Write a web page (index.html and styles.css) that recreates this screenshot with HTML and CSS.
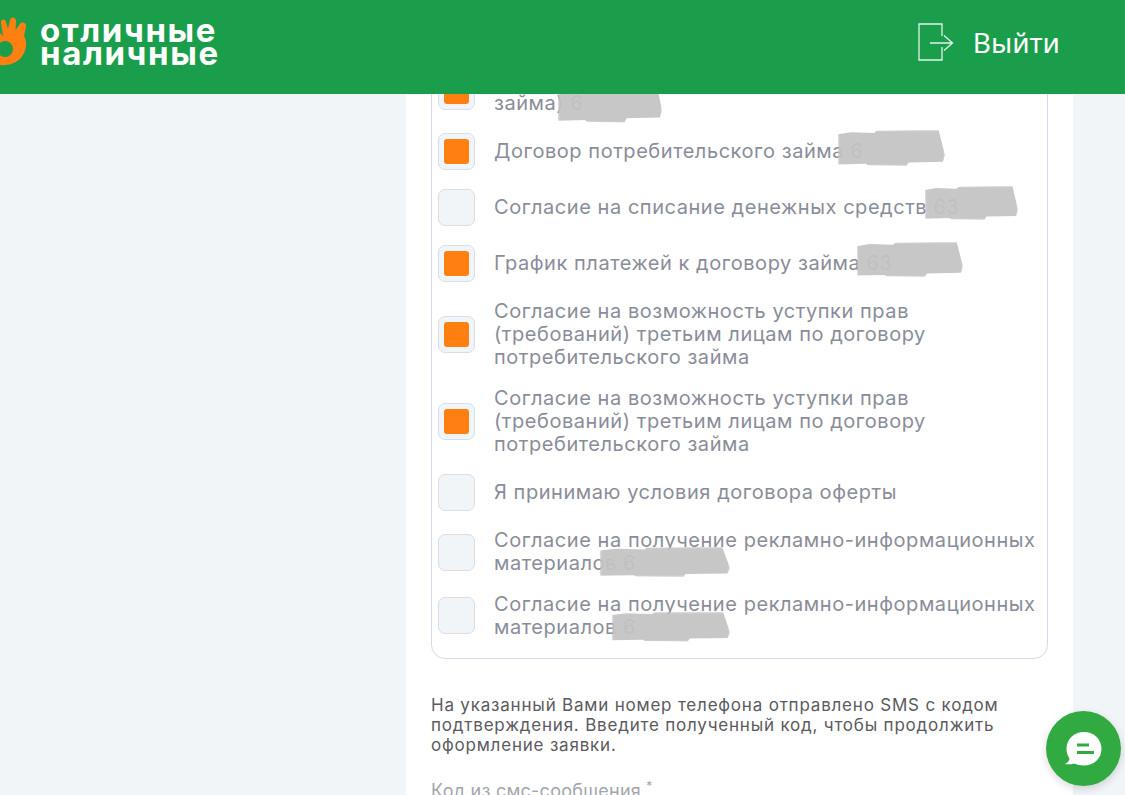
FILE: index.html
```html
<!DOCTYPE html>
<html lang="ru">
  <head>
    <meta charset="UTF-8" />
    <title>Отличные наличные</title>
    <link rel="stylesheet" href="styles.css">
  </head>
  <body>
    <header class="topbar">
      <a class="logo">
        <svg class="logo-hand" width="28" height="50" viewBox="0 0 28 50">
          <path d="M0 16L3 19L1 6C0.500 2 5 1 6 5L8 12L10 3C11 -1 16 0 16 4L15.500 13L20 7C22 4 27 6 26 10L24 19C27 24 27 31 23 38C19 45 10 49 0 48Z" fill="#ff7f11"/>
          <circle cx="5" cy="32" r="8" fill="#1a9e4b"/>
        </svg>
        <span class="logo-text">отличные<br>наличные</span>
      </a>
      <a class="logout">
        <svg width="36" height="38" viewBox="0 0 36 38" fill="none" stroke="#e4f3e9" stroke-width="1.300">
          <path d="M24 13V1H1V37H24V24"/>
          <path d="M12 20H34M26 12.500L34.500 20L26 27.500"/>
        </svg>
        <span>Выйти</span>
      </a>
    </header>

    <main class="column">
      <div class="docs">
        <label class="doc">
          <span class="box on"></span>
          <span class="doc-text">Согласие на обработку персональных данных (договор<br>займа) 6</span>
          <i class="smudge s1"></i>
        </label>
        <label class="doc">
          <span class="box on"></span>
          <span class="doc-text">Договор потребительского займа 6</span>
          <i class="smudge s2"></i>
        </label>
        <label class="doc">
          <span class="box"></span>
          <span class="doc-text">Согласие на списание денежных средств 63</span>
          <i class="smudge s3"></i>
        </label>
        <label class="doc">
          <span class="box on"></span>
          <span class="doc-text">График платежей к договору займа 63</span>
          <i class="smudge s4"></i>
        </label>
        <label class="doc">
          <span class="box on"></span>
          <span class="doc-text">Согласие на возможность уступки прав<br>(требований) третьим лицам по договору<br>потребительского займа</span>
        </label>
        <label class="doc">
          <span class="box on"></span>
          <span class="doc-text">Согласие на возможность уступки прав<br>(требований) третьим лицам по договору<br>потребительского займа</span>
        </label>
        <label class="doc">
          <span class="box"></span>
          <span class="doc-text">Я принимаю условия договора оферты</span>
        </label>
        <label class="doc">
          <span class="box"></span>
          <span class="doc-text">Согласие на получение рекламно-информационных<br>материалов 6</span>
          <i class="smudge s5"></i>
        </label>
        <label class="doc">
          <span class="box"></span>
          <span class="doc-text">Согласие на получение рекламно-информационных<br>материалов 6</span>
          <i class="smudge s6"></i>
        </label>
      </div>

      <p class="notice">На указанный Вами номер телефона отправлено SMS с кодом<br>подтверждения. Введите полученный код, чтобы продолжить<br>оформление заявки.</p>
      <div class="field-label">Код из смс-сообщения <sup>*</sup></div>
    </main>

    <button class="chat">
      <svg width="38" height="36" viewBox="0 0 38 36">
        <path d="M19 1C29 1 36.500 8 36.500 18C36.500 27 29 34.500 19 34.500C15 34.500 12 33.500 9 32.500C6 33.500 3 33.500 0 33C3 31.500 4.500 29.500 4.500 27.500C2.500 24.500 1.500 21.500 1.500 18C1.500 8 9 1 19 1Z" fill="#fff"/>
        <path d="M12 14H24M12 21.500H29" stroke="#30aa41" stroke-width="2.800"/>
      </svg>
    </button>
  </body>
</html>
```

FILE: styles.css
```css
html,
body {
  height: 795px;
  overflow: hidden;
}
body {
  margin: 0;
  background-color: #f1f5f7;
  font-family: Inter, Arial, sans-serif;
  color: #8a8d99;
}
.topbar {
  position: fixed;
  top: 0;
  left: 0;
  right: 0;
  height: 94px;
  box-sizing: border-box;
  padding-bottom: 10px;
  z-index: 2;
  background-color: #1a9e4b;
  display: flex;
  justify-content: space-between;
  align-items: center;
}
.logo {
  display: flex;
  align-items: center;
  gap: 12px;
}
.logo-text {
  font-weight: 700;
  font-size: 33px;
  line-height: 23px;
  letter-spacing: 1.600px;
  color: #ffffff;
}
.logout {
  display: flex;
  align-items: center;
  gap: 19px;
  margin-right: 65px;
  font-family: "Noto Sans", Arial, sans-serif;
  font-size: 28px;
  color: #ffffff;
}
.column {
  width: 667px;
  height: 795px;
  margin-left: 406px;
  box-sizing: border-box;
  padding: 47px 25px 0;
  background-color: #ffffff;
}
.docs {
  display: flex;
  flex-direction: column;
  gap: 17.500px;
  border: 1px solid #d5dae6;
  border-radius: 14px;
  padding: 20.500px 6px 19.500px;
}
.doc {
  position: relative;
  display: flex;
  align-items: center;
  gap: 19px;
  min-height: 38.500px;
}
.box {
  flex: none;
  width: 37px;
  height: 37px;
  box-sizing: border-box;
  border: 1px solid #d9dfe8;
  border-radius: 7px;
  background-color: #f1f5f7;
  display: flex;
  align-items: center;
  justify-content: center;
}
.box.on::after {
  content: "";
  width: 25px;
  height: 25px;
  border-radius: 3px;
  background-color: #ff7f11;
}
.doc-text {
  font-size: 20px;
  line-height: 23px;
  letter-spacing: 0.550px;
  white-space: nowrap;
}
/* grey patches over the phone numbers */
.smudge {
  position: absolute;
  background-color: rgba(196, 196, 196, 0.94);
  filter: blur(0.800px);
  clip-path: polygon(0 12%, 12% 6%, 34% 8%, 36% 2%, 76% 0, 94% 0, 100% 70%, 98% 88%, 66% 90%, 64% 100%, 28% 98%, 26% 94%, 0 96%);
}
.s1 { left: 120px; top: 12px; width: 104px; height: 42px; }
.s2 { left: 400px; top: -2px; width: 107px; height: 36px; }
.s3 { left: 487px; top: -2px; width: 93px; height: 34px; }
.s4 { left: 419px; top: -2px; width: 106px; height: 35px; }
.s5 { left: 162px; top: 18px; width: 130px; height: 30px; }
.s6 { left: 174px; top: 19px; width: 118px; height: 30px; }
.notice {
  margin: 36px 0 0;
  font-size: 17px;
  line-height: 20px;
  letter-spacing: 0.800px;
  color: #5b5a60;
}
.field-label {
  margin-top: 19px;
  font-size: 18px;
  line-height: 24px;
  letter-spacing: 0.250px;
  color: #a3a6ad;
}
.field-label sup {
  font-size: 12px;
}
.chat {
  position: fixed;
  left: 1046px;
  top: 711px;
  width: 75px;
  height: 75px;
  padding: 0;
  border: none;
  border-radius: 50%;
  background-color: #30aa41;
  box-shadow: 0 3px 8px rgba(0, 0, 0, 0.15);
  display: flex;
  align-items: center;
  justify-content: center;
}
```
